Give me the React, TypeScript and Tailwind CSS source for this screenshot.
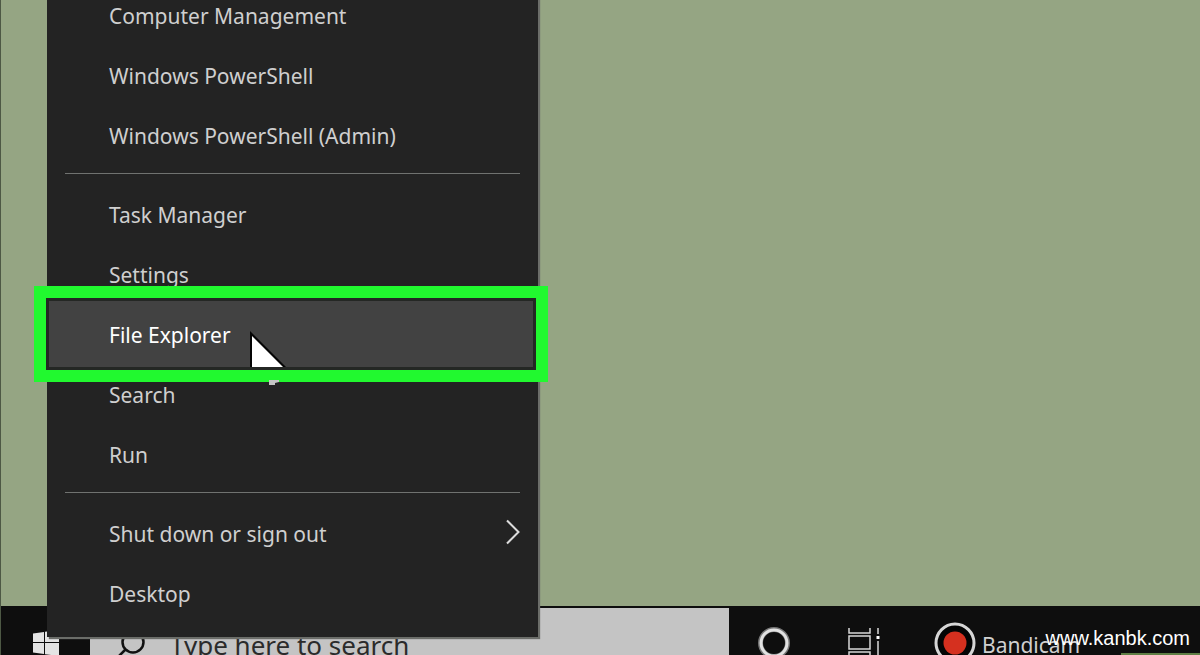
import type { ReactNode } from "react";

type ItemProps = {
  label: string;
  active?: boolean;
  children?: ReactNode;
};

function MenuItem({ label, active = false, children }: ItemProps) {
  return (
    <li className="relative">
      {active && (
        <span className="absolute -top-[19px] -right-[10px] -bottom-[17px] -left-[13px] border-[12px] border-[#21f92f] bg-[#242724] p-[3px]">
          <span className="block h-full bg-[#424242]" />
        </span>
      )}
      <button
        type="button"
        className={
          active
            ? "relative flex h-[60px] w-full items-center justify-between pt-[2px] pr-[18px] pl-[62px] text-left text-[21px] text-white"
            : "flex h-[60px] w-full items-center justify-between pt-[2px] pr-[18px] pl-[62px] text-left text-[21px] text-[#cfcfcf]"
        }
      >
        {label}
        {children}
      </button>
    </li>
  );
}

function Separator() {
  return <hr className="mx-[18px] mt-[7px] mb-[11px] border-[#707270]" />;
}

function Cursor() {
  return (
    <svg
      className="pointer-events-none absolute bottom-[250px] left-[202px]"
      width="40"
      height="56"
      viewBox="0 0 40 56"
    >
      <path d="M1 0V36H37Z" fill="#050505" />
      <path d="M3 5V36H34Z" fill="#fff" />
      <path d="M20 49h10v2l-4 1v2h-6Z" fill="#c4c4c4" />
    </svg>
  );
}

function PowerMenu() {
  return (
    <nav className="absolute bottom-[18px] left-[46px] w-[491px] bg-[#232323] pb-[13px] shadow-[2px_2px_1px_#6b6d69]">
      <ul>
        <MenuItem label="Computer Management" />
        <MenuItem label="Windows PowerShell" />
        <MenuItem label="Windows PowerShell (Admin)" />
      </ul>
      <Separator />
      <ul>
        <MenuItem label="Task Manager" />
        <MenuItem label="Settings" />
        <MenuItem label="File Explorer" active />
        <MenuItem label="Search" />
        <MenuItem label="Run" />
      </ul>
      <Separator />
      <ul>
        <MenuItem label="Shut down or sign out">
          <svg className="mb-[6px]" width="14" height="26" viewBox="0 0 14 26" fill="none" stroke="#dcdcdc" strokeWidth="2">
            <path d="M1 1.5 12.5 13 1 24.5" />
          </svg>
        </MenuItem>
        <MenuItem label="Desktop" />
      </ul>
      <Cursor />
    </nav>
  );
}

function Taskbar() {
  return (
    <footer className="h-[49px] overflow-hidden bg-[#0e0e0e]">
      <div className="flex h-[74px] items-center text-[#d0d0d0]">
        <button type="button" aria-label="Start" className="flex h-full w-[89px] items-center justify-center">
          <svg width="26" height="26" viewBox="0 0 26 26" fill="#e4e4e4">
            <path d="M0 3.5 11 2v10H0ZM12 1.8 26 0v12H12ZM0 13h11v11L0 22.5ZM12 13h14v13l-14-1.8Z" />
          </svg>
        </button>
        <label className="mt-[4px] flex h-full w-[639px] items-center gap-[24px] bg-[#c4c4c4] pl-[25px]">
          <svg width="31" height="31" viewBox="0 0 31 31" fill="none" stroke="#111" strokeWidth="2.5">
            <circle cx="18" cy="12" r="10.5" />
            <path d="M10.5 19.5 1 29" />
          </svg>
          <input
            type="text"
            aria-label="Search"
            placeholder="Type here to search"
            className="h-[40px] flex-1 bg-transparent text-[26px] outline-none placeholder:text-[#2b2b2b]"
          />
        </label>
        <button type="button" aria-label="Cortana" className="flex w-[90px] justify-center">
          <svg width="32" height="32" viewBox="0 0 32 32" fill="none">
            <circle cx="16" cy="16" r="13.5" stroke="#777" strokeWidth="5" />
            <circle cx="16" cy="16" r="13" stroke="#e2e2e2" strokeWidth="3" />
          </svg>
        </button>
        <button type="button" aria-label="Task View" className="flex w-[90px] justify-center">
          <svg width="32" height="32" viewBox="0 0 32 32" fill="none" stroke="#d8d8d8" strokeWidth="1.5">
            <path d="M1 1v5h21V1M1 9h21v13H1ZM1 31v-6h21v6M30 1v6M30 14v17" />
            <path d="M28.5 9h3v3h-3Z" fill="#fff" stroke="none" />
          </svg>
        </button>
        <button type="button" className="ml-[25px] flex items-center gap-[6px] text-[21px]">
          <svg width="42" height="42" viewBox="0 0 42 42">
            <circle cx="21" cy="21" r="19" fill="#050505" stroke="#d6d6d6" strokeWidth="3" />
            <circle cx="21" cy="21" r="11.5" fill="#d5301f" />
          </svg>
          <span className="pt-[6px]">Bandicam</span>
        </button>
      </div>
    </footer>
  );
}

export default function App() {
  return (
    <main className="relative flex h-screen flex-col overflow-hidden border-l border-[#4d5844] bg-[#95a583] font-['Noto_Sans','Open_Sans',sans-serif]">
      <div className="flex-1" />
      <Taskbar />
      <PowerMenu />
      <span className="absolute right-0 bottom-0 h-[2px] w-[79px] bg-[#5f7f45]" />
      <a
        href="#site"
        className="absolute right-[10px] bottom-[5px] font-['Liberation_Sans',sans-serif] text-[20px] leading-[24px] text-white"
      >
        www.kanbk.com
      </a>
    </main>
  );
}
